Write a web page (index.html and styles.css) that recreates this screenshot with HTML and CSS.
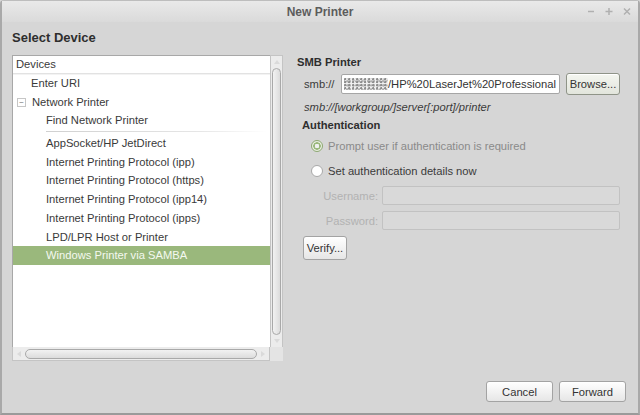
FILE: index.html
```html
<!DOCTYPE html>
<html>
<head>
<meta charset="utf-8">
<link rel="stylesheet" href="styles.css">
</head>
<body>
<div class="window">
  <div class="titlebar">
    <span class="title">New Printer</span>
    <div class="controls">
      <svg width="10" height="10" viewBox="0 0 10 10"><path d="M2 5.5h6" stroke="#b0b0b0" stroke-width="1.5"/></svg>
      <svg width="10" height="10" viewBox="0 0 10 10"><path d="M1.5 5.5h7M5 2v7" stroke="#b0b0b0" stroke-width="1.5"/></svg>
      <svg width="10" height="10" viewBox="0 0 10 10"><path d="M2 2.5l6 6M8 2.5l-6 6" stroke="#b0b0b0" stroke-width="1.5"/></svg>
    </div>
  </div>
  <div class="content">
    <div class="heading">Select Device</div>
    <div class="main">
      <div class="listwrap">
        <div class="listrow">
          <div class="list">
            <div class="list-header">Devices</div>
            <div class="item lvl1">Enter URI</div>
            <div class="item lvl1"><span class="expander">−</span>Network Printer</div>
            <div class="item lvl2">Find Network Printer</div>
            <div class="sep"></div>
            <div class="item lvl2">AppSocket/HP JetDirect</div>
            <div class="item lvl2">Internet Printing Protocol (ipp)</div>
            <div class="item lvl2">Internet Printing Protocol (https)</div>
            <div class="item lvl2">Internet Printing Protocol (ipp14)</div>
            <div class="item lvl2">Internet Printing Protocol (ipps)</div>
            <div class="item lvl2">LPD/LPR Host or Printer</div>
            <div class="item lvl2 selected">Windows Printer via SAMBA</div>
          </div>
          <div class="vscroll">
            <div class="arrow up"></div>
            <div class="vthumb"></div>
            <div class="arrow down"></div>
          </div>
        </div>
        <div class="hscrollrow">
          <div class="hscroll">
            <div class="harrow left"></div>
            <div class="hthumb"></div>
            <div class="harrow right"></div>
          </div>
          <div class="corner"></div>
        </div>
      </div>
      <div class="panel">
        <div class="section-title">SMB Printer</div>
        <div class="smbrow">
          <span class="smblabel">smb://</span>
          <div class="entry smbentry"><span class="blur"></span>/HP%20LaserJet%20Professional</div>
          <button class="btn browse">Browse...</button>
        </div>
        <div class="hint">smb://[workgroup/]server[:port]/printer</div>
        <div class="section-title auth">Authentication</div>
        <div class="radio-row disabled"><span class="radio on"></span>Prompt user if authentication is required</div>
        <div class="radio-row"><span class="radio"></span>Set authentication details now</div>
        <div class="field-row"><span class="flabel">Username:</span><div class="entry dis"></div></div>
        <div class="field-row"><span class="flabel">Password:</span><div class="entry dis"></div></div>
        <div class="verify-row"><button class="btn verify">Verify...</button></div>
      </div>
    </div>
    <div class="buttons">
      <button class="btn big">Cancel</button>
      <button class="btn big">Forward</button>
    </div>
  </div>
</div>
</body>
</html>
```
FILE: styles.css
```css
html, body {
  margin: 0;
  padding: 0;
  width: 640px;
  height: 415px;
  overflow: hidden;
  background: #d6d6d6;
  font-family: "Liberation Sans", Arial, sans-serif;
  font-size: 11.2px;
  color: #3a3a3a;
}
.window {
  width: 640px;
  height: 415px;
  box-sizing: border-box;
  border-left: 2px solid #a9a9a9;
  border-right: 2px solid #a9a9a9;
  border-bottom: 2px solid #9a9a9a;
  border-top: 1px solid #bdbdbd;
  display: flex;
  flex-direction: column;
  background: #d6d6d6;
  border-radius: 4px 4px 0 0;
}
.titlebar {
  height: 21px;
  position: relative;
  display: flex;
  align-items: center;
  justify-content: center;
  background: linear-gradient(#e9e9e9, #dadada);
}
.title {
  font-weight: bold;
  font-size: 12px;
  color: #5c5c5c;
}
.controls {
  position: absolute;
  right: 6px;
  top: 5px;
  display: flex;
  gap: 8px;
}
.content {
  flex: 1;
  display: flex;
  flex-direction: column;
  padding: 8px 12px 11px 10px;
}
.heading {
  font-weight: bold;
  font-size: 13px;
  color: #2e2e2e;
  height: 16px;
  line-height: 16px;
  margin-bottom: 9px;
}
.main {
  display: flex;
  flex: 1;
}
.listwrap {
  width: 271px;
  height: 306px;
  display: flex;
  flex-direction: column;
}
.listrow {
  display: flex;
  height: 292px;
}
.list {
  background: #fff;
  border: 1px solid #a8a8a8;
  border-right: none;
  border-bottom: none;
  box-sizing: border-box;
  width: 258px;
}
.list-header {
  height: 17px;
  line-height: 17px;
  padding-left: 3px;
  color: #3a3a3a;
  border-bottom: 1px solid #e2e2e2;
  box-shadow: 0 1px 0 #f3f3f3;
}
.item {
  height: 18.7px;
  line-height: 18.7px;
  color: #3a3a3a;
  white-space: nowrap;
  display: flex;
  align-items: center;
}
.lvl1 { padding-left: 18px; }
.lvl2 { padding-left: 33px; }
.expander {
  width: 7px;
  height: 7px;
  border: 1px solid #c6c6c6;
  font-size: 8px;
  line-height: 7px;
  text-align: center;
  color: #777;
  margin-left: -14px;
  margin-right: 6px;
  box-sizing: content-box;
}
.sep {
  height: 2px;
  margin-top: 1px;
  margin-left: 33px;
  margin-right: 4px;
  border-top: 1px solid #dcdcdc;
  border-image: linear-gradient(90deg, #d0d0d0, #e6e6e6 70%, #ffffff) 1;
}
.selected {
  background: #9ab87c;
  color: #f4f8f0;
}
.vscroll {
  width: 13px;
  background: #ececec;
  border: 1px solid #c4c4c4;
  border-bottom: none;
  box-sizing: border-box;
  display: flex;
  flex-direction: column;
  align-items: center;
}
.arrow {
  width: 0;
  height: 0;
  border-left: 3px solid transparent;
  border-right: 3px solid transparent;
  margin: 4px 0;
}
.arrow.up { border-bottom: 4px solid #dadada; }
.arrow.down { border-top: 4px solid #dadada; }
.vthumb {
  flex: 1;
  width: 9px;
  border: 1px solid #a9a9a9;
  border-radius: 5px;
  background: linear-gradient(90deg, #f2f2f2, #dcdcdc);
  box-sizing: border-box;
}
.hscrollrow {
  display: flex;
  height: 14px;
}
.hscroll {
  width: 258px;
  background: #ececec;
  border: 1px solid #c4c4c4;
  border-top: none;
  box-sizing: border-box;
  display: flex;
  align-items: center;
}
.harrow {
  width: 0;
  height: 0;
  border-top: 3px solid transparent;
  border-bottom: 3px solid transparent;
  margin: 0 4px;
}
.harrow.left { border-right: 4px solid #dadada; }
.harrow.right { border-left: 4px solid #dadada; }
.hthumb {
  flex: 1;
  height: 10px;
  border: 1px solid #a9a9a9;
  border-radius: 5px;
  background: linear-gradient(#f2f2f2, #dcdcdc);
  box-sizing: border-box;
}
.corner {
  width: 13px;
  background: #e4e4e4;
}
.panel {
  flex: 1;
  padding-left: 14px;
  display: flex;
  flex-direction: column;
}
.section-title {
  font-weight: bold;
  color: #2e2e2e;
  height: 14px;
  line-height: 14px;
}
.smbrow {
  display: flex;
  align-items: center;
  margin-top: 4px;
  height: 22px;
}
.smblabel {
  margin-left: 7px;
  width: 37px;
  color: #3a3a3a;
}
.entry {
  height: 20px;
  box-sizing: border-box;
  border: 1px solid #a6a6a6;
  border-radius: 2px;
  background: #fff;
  line-height: 18px;
  color: #333;
  white-space: nowrap;
  overflow: hidden;
}
.smbentry {
  width: 219px;
  display: flex;
  align-items: center;
  padding-left: 2px;
}
.blur {
  display: inline-block;
  width: 44px;
  height: 12px;
  background:
    radial-gradient(circle at 30% 40%, #8e8e8e 0 0.8px, transparent 1.4px) 0 0 / 4px 3px,
    radial-gradient(circle at 70% 60%, #b0b0b0 0 0.8px, transparent 1.4px) 1px 1px / 3px 4px,
    radial-gradient(circle at 50% 50%, #c8c8c8 0 1px, transparent 1.6px) 2px 0 / 5px 5px,
    #f0f0f0;
}
.btn {
  font-family: "Liberation Sans", Arial, sans-serif;
  font-size: 11.2px;
  color: #333;
  border: 1px solid #a3a3a3;
  border-radius: 3px;
  background: linear-gradient(#ffffff, #e6e6e6);
  padding: 0;
  box-shadow: inset 0 1px 0 #fff;
}
.browse {
  margin-left: 6px;
  width: 54px;
  height: 22px;
  background: linear-gradient(#f4f6f0, #e2e5dc);
  border-color: #8f9488;
}
.hint {
  font-style: italic;
  margin-left: 7px;
  margin-top: 5px;
  height: 14px;
  line-height: 14px;
  color: #3a3a3a;
}
.auth {
  margin-top: 4px;
  margin-left: 5px;
}
.radio-row {
  display: flex;
  align-items: center;
  height: 18px;
  margin-left: 14px;
  margin-top: 5px;
  color: #3a3a3a;
}
.radio-row + .radio-row { margin-top: 7px; }
.radio-row.disabled { color: #8a8a8a; }
.radio {
  width: 12px;
  height: 12px;
  border-radius: 50%;
  box-sizing: border-box;
  border: 1px solid #a9a9a9;
  background: #fff;
  margin-right: 5px;
}
.radio.on {
  border-color: #8ea873;
  background: radial-gradient(circle, #f0f0f0 0 2px, #9ab87c 2.5px 3.5px, #e8eee0 4px);
}
.field-row {
  display: flex;
  align-items: center;
  margin-top: 6px;
  height: 19px;
}
.flabel {
  width: 85px;
  text-align: right;
  padding-right: 4px;
  box-sizing: border-box;
  color: #b2b2b2;
}
.entry.dis {
  width: 238px;
  height: 19px;
  background: #d9d9d9;
  border-color: #c2c2c2;
}
.verify-row {
  margin-top: 6px;
  margin-left: 6px;
}
.verify {
  width: 44px;
  height: 24px;
}
.buttons {
  display: flex;
  justify-content: flex-end;
  gap: 6px;
}
.big {
  width: 67px;
  height: 21px;
}
```
